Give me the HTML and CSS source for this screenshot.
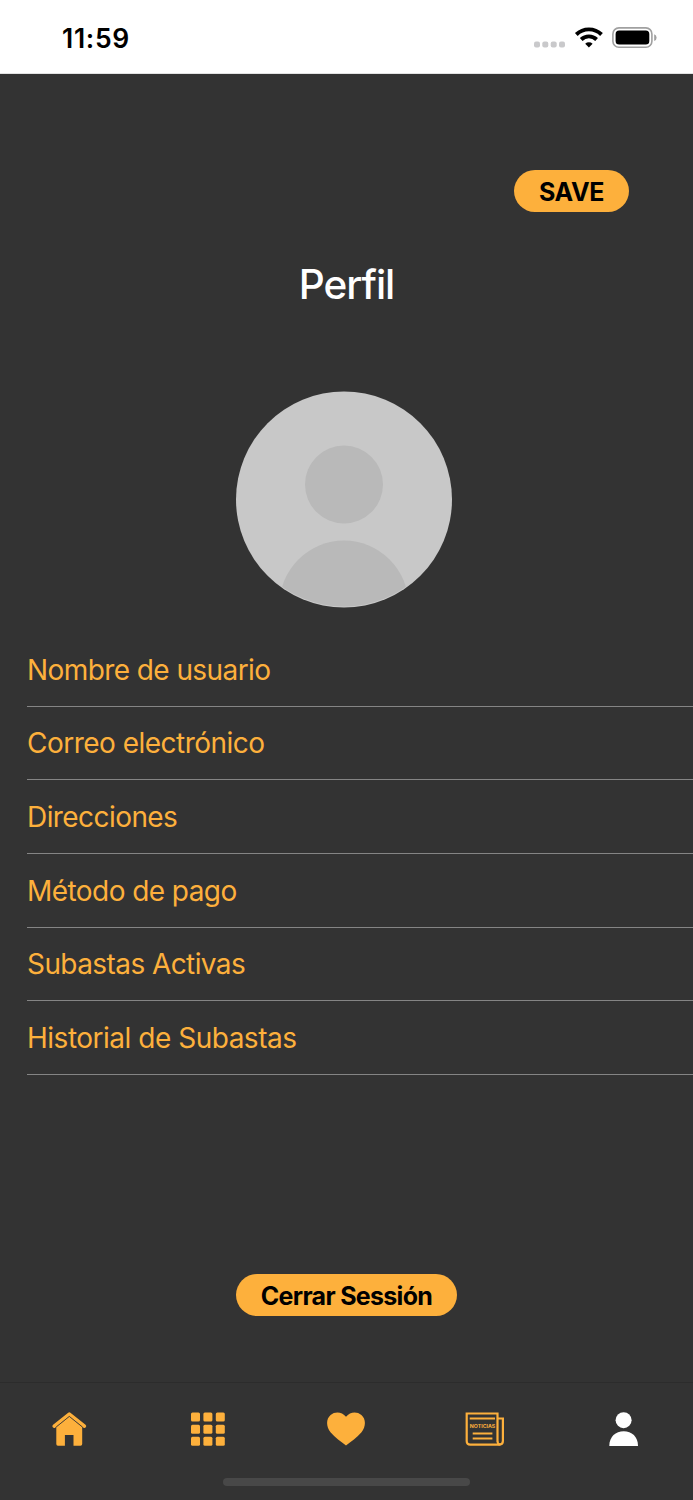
FILE: index.html
```html
<!DOCTYPE html>
<html lang="es">
<head>
<meta charset="utf-8">
<title>Perfil</title>
<link rel="stylesheet" href="styles.css">
</head>
<body>
<div class="screen">
  <header class="status">
    <span class="time">11:59</span>
    <svg class="status-icons" width="126" height="28" viewBox="0 0 126 28">
      <g fill="#c9c9cb"><rect x="1" y="18.500" width="6" height="6" rx="2"/><rect x="9.300" y="18.500" width="6" height="6" rx="2"/><rect x="17.700" y="18.500" width="6" height="6" rx="2"/><rect x="26" y="18.500" width="6" height="6" rx="2"/></g>
      <g fill="none" stroke="#000" stroke-width="3.900"><path d="M43.300 11.500a18 18 0 0 1 25.200 0"/><path d="M48.200 16.500a11 11 0 0 1 15.400 0"/></g>
      <path d="M55.900 24.500l-3.700-3.700a5.500 5.500 0 0 1 7.400 0z"/>
      <rect x="79.900" y="4.900" width="39" height="19.400" rx="6" fill="none" stroke="#a0a0a0" stroke-width="1.600"/>
      <rect x="82.600" y="7.600" width="33.700" height="14" rx="3.500"/>
      <path d="M121.200 11.300q2.400 1 2.400 3.400t-2.400 3.400z" fill="#a0a0a0"/>
    </svg>
  </header>
  <main class="content">
    <button class="pill save"><span>SAVE</span></button>
    <h1 class="title"><span>Perfil</span></h1>
    <svg class="avatar" width="216" height="217" viewBox="0 0 216 217">
      <clipPath id="c"><circle cx="108" cy="108.500" r="107"/></clipPath>
      <circle cx="108" cy="108.500" r="108" fill="#c8c8c8"/>
      <g fill="#b9b9b9" clip-path="url(#c)"><circle cx="108" cy="93.500" r="39"/><circle cx="108" cy="214" r="64.500"/></g>
    </svg>
    <ul class="menu">
      <li><span class="m1">Nombre de usuario</span></li>
      <li><span class="m2">Correo electrónico</span></li>
      <li><span class="m3">Direcciones</span></li>
      <li><span class="m4">Método de pago</span></li>
      <li><span class="m5">Subastas Activas</span></li>
      <li><span class="m6">Historial de Subastas</span></li>
    </ul>
    <button class="pill logout"><span>Cerrar Sessión</span></button>
  </main>
  <nav class="tabs">
    <a><svg width="36" height="36" viewBox="0 0 36 36"><path d="M3.200 15.200L18.300 3.100l15.100 12.100" fill="none" stroke="#fdb03c" stroke-width="3.600" stroke-linecap="round" stroke-linejoin="round"/><path d="M18.300 5.400L31.200 16v17q0 1.700-1.700 1.700h-7V24h-8.600v10.700h-7Q5.300 34.700 5.300 33V16z" fill="#fdb03c"/><path d="M5.300 15.900L18.300 5.400l13 10.500" fill="none" stroke="#333" stroke-width=".8"/></svg></a>
    <a><svg width="36" height="36" viewBox="0 0 36 36"><g fill="#fdb03c"><rect x="1" y="1.500" width="9" height="9" rx="1.500"/><rect x="13.400" y="1.500" width="9" height="9" rx="1.500"/><rect x="25.800" y="1.500" width="9" height="9" rx="1.500"/><rect x="1" y="13.700" width="9" height="9" rx="1.500"/><rect x="13.400" y="13.700" width="9" height="9" rx="1.500"/><rect x="25.800" y="13.700" width="9" height="9" rx="1.500"/><rect x="1" y="25.800" width="9" height="9" rx="1.500"/><rect x="13.400" y="25.800" width="9" height="9" rx="1.500"/><rect x="25.800" y="25.800" width="9" height="9" rx="1.500"/></g></svg></a>
    <a><svg width="40" height="36" viewBox="0 0 40 36"><path d="M20 34.500C15 30.800 9 26.200 4.500 21.200C-.2 15.300.1 7.700 4.600 3.900C9.300.1 16 .7 20 5.800C24 .7 30.700.1 35.400 3.900C39.900 7.700 40.200 15.300 35.500 21.200C31 26.200 25 30.800 20 34.500z" fill="#fdb03c"/></svg></a>
    <a><svg width="40" height="36" viewBox="0 0 40 36"><g fill="none" stroke="#fdb03c" stroke-width="2.200"><path d="M32.500 30.500V2.500H1.700v27.500Q1.700 33.600 5.300 33.600h29.200Q37.900 33.600 37.900 30.100V7.500H32.500"/><path d="M32.500 29.900q0 3.700 3 3.700M4.700 7.500h25.300M7.700 22.500h19.700M7.700 27.500h19.700" stroke-width="2"/></g><text x="4.800" y="16.900" textLength="25.500" lengthAdjust="spacingAndGlyphs" class="news">NOTICIAS</text></svg></a>
    <a><svg width="36" height="36" viewBox="0 0 36 36" fill="#fff"><circle cx="17.600" cy="9.200" r="8"/><path d="M3.300 34.900C3.300 25.700 9.700 20.300 17.700 20.300s14.300 5.400 14.300 14.600z"/></svg></a>
    <div class="home-bar"></div>
  </nav>
</div>
</body>
</html>
```
FILE: styles.css
```css
* { box-sizing: border-box; }
body { margin: 0; font-family: Inter, "Liberation Sans", sans-serif; background: #333; }
.screen { width: 693px; height: 1500px; display: flex; flex-direction: column; background: #333; overflow: hidden; }
.status { height: 74px; background: #fff; border-bottom: 1px solid #e2e2e2; display: flex; justify-content: space-between; align-items: flex-start; padding: 23px 34px 0 62px; }
.time { font-size: 26.500px; font-weight: 600; line-height: 30px; letter-spacing: .7px; }
.content { flex: 1; display: flex; flex-direction: column; }
.pill { border: 0; border-radius: 21px; height: 42px; padding: 2px 0 0; background: #fdb03c; color: #000; font-family: inherit; font-size: 25px; font-weight: 650; line-height: 40px; white-space: nowrap; }
.save { align-self: flex-end; width: 115px; margin: 96px 64px 0 0; letter-spacing: -.4px; }
.title { margin: 46px 0 0; text-align: center; color: #fff; font-size: 40.500px; font-weight: 450; line-height: 53px; letter-spacing: -1.050px; }
.avatar { display: block; margin: 80px 0 0 236px; }
.menu { list-style: none; margin: 25px 0 0 27px; padding: 0; color: #fdb03c; font-size: 28px; }
.menu li { height: 73.670px; border-bottom: 1px solid #858585; display: flex; align-items: center; padding-top: 1px; }
.menu span { white-space: nowrap; }
.m1 { letter-spacing: -.580px; }
.m2 { letter-spacing: -.520px; }
.m3 { letter-spacing: -.570px; }
.m4 { letter-spacing: -.560px; }
.m5 { letter-spacing: -.580px; }
.m6 { letter-spacing: -.490px; }
.logout { width: 221px; margin: 199px 0 0 236px; letter-spacing: -.7px; }
.tabs { height: 118px; border-top: 1px solid #2c2c2c; display: grid; grid-template-columns: repeat(5, 1fr); grid-template-rows: 64px 1fr; padding-top: 28px; }
.tabs a { display: flex; justify-content: center; align-items: flex-start; }
.tabs svg { display: block; }
.news { font: 700 4.800px Inter, sans-serif; fill: #fdb03c; }
.home-bar { grid-column: 1 / -1; justify-self: center; margin-top: 3px; width: 247px; height: 8px; border-radius: 4px; background: #484848; }
```
